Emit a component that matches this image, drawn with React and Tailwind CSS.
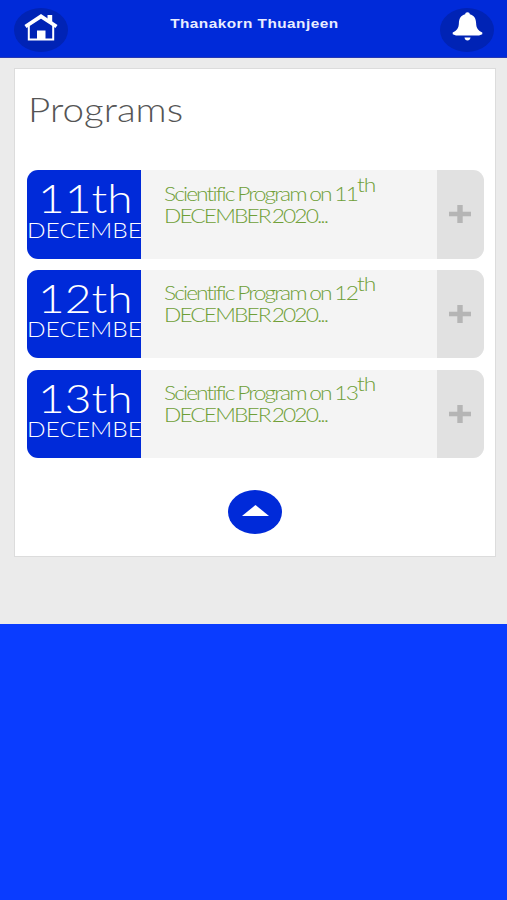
const programs = ["11", "12", "13"];

function HomeIcon() {
  return (
    <svg className="h-[28px] w-[34px]" viewBox="0 0 34 28" fill="none">
      <path d="M4.8 11V25.5H29.2V11" stroke="white" strokeWidth="2" />
      <path d="M1.5 12.5L17 2.3L32.5 12.5" stroke="white" strokeWidth="3.8" strokeLinejoin="miter" />
      <path d="M23.5 1H28.2V10L23.5 7Z" fill="white" />
      <path d="M13 16.5H21.5V26H13Z" fill="white" />
    </svg>
  );
}

function BellIcon() {
  return (
    <svg className="h-[29px] w-[31px]" viewBox="0 0 31 29" fill="white">
      <path d="M13.2 2.2C13.2 .9 14.1.2 15.5.2S17.8.9 17.8 2.2C22 3.2 24 6.6 24.1 11C24.2 16.2 26.2 18.7 30.3 20.5V22.2L27 23.4H4L.7 22.2V20.5C4.8 18.7 6.8 16.2 6.9 11C7 6.6 9 3.2 13.2 2.2Z" />
      <path d="M12.5 25.5H18.5C18.2 27.5 17.2 28.5 15.5 28.5S12.8 27.5 12.5 25.5Z" />
    </svg>
  );
}

function ProgramRow({ day }) {
  return (
    <div className="flex h-[88.5px] overflow-hidden rounded-[11px] bg-[#f4f4f4]">
      <div className="w-[114px] shrink-0 overflow-hidden bg-[#002ad9] pt-[8px] text-white">
        <div className="ml-[11px] h-[38.5px] w-max origin-left scale-x-[1.18] text-[39px] leading-[40px] whitespace-nowrap">
          {day}th
        </div>
        <div className="h-[25px] w-max origin-left scale-x-[1.165] text-[21px] leading-[25px] whitespace-nowrap">
          DECEMBE
        </div>
      </div>
      <div className="flex-1 pt-[12.5px] pl-[23px] text-[#6f9f37]">
        <div className="w-max origin-left scale-x-[1.2] text-[19px] leading-[22px] tracking-[-1.6px] whitespace-nowrap">
          <div className="h-[22px] [word-spacing:-0.5px]">
            Scientific Program on {day}
            <sup className="top-[-9px] text-[19px] leading-none tracking-[-0.8px]">th</sup>
          </div>
          <div className="h-[22px] [word-spacing:-1.8px]">DECEMBER 2020...</div>
        </div>
      </div>
      <div className="flex w-[47px] shrink-0 items-center justify-center bg-[#e1e1e1]">
        <svg className="mr-[1px] h-[18px] w-[22px]" viewBox="0 0 22 18" fill="#b5b5b5">
          <path d="M8.3 0H13.7V6.8H22V11.2H13.7V18H8.3V11.2H0V6.8H8.3Z" />
        </svg>
      </div>
    </div>
  );
}

export default function App() {
  return (
    <div className="flex h-[900px] w-[507px] flex-col overflow-hidden bg-[#ebebeb] font-['Lato',sans-serif] font-light">
      <header className="flex h-[58px] shrink-0 justify-between border-b border-[#2638b4] bg-[#002ad9] px-[14px] pt-[8px]">
        <div className="flex h-[44px] w-[54px] items-center justify-center rounded-[50%] bg-[#0023b5] pb-[5px]">
          <HomeIcon />
        </div>
        <h1 className="mt-[1px] h-[30px] w-max origin-center scale-x-[1.18] font-['Liberation_Sans',sans-serif] text-[13px] leading-[30px] font-bold tracking-[0.4px] whitespace-nowrap text-[#e9edff]">
          Thanakorn Thuanjeen
        </h1>
        <div className="mr-[-1px] flex h-[44px] w-[54px] items-center justify-center rounded-[50%] bg-[#0023b5] pb-[7px] pl-[1px]">
          <BellIcon />
        </div>
      </header>
      <main className="h-[566px] shrink-0 pt-[10px] pr-[11px] pl-[14px]">
        <section className="h-[489px] border border-[#dcdcdc] bg-white pr-[12px] pl-[12px]">
          <h2 className="mt-[20px] ml-[1px] h-[40px] w-max origin-left scale-x-[1.17] text-[33px] leading-[40px] whitespace-nowrap text-[#555]">
            Programs
          </h2>
          <div className="mt-[41px] mr-[-1px] flex flex-col gap-[11.25px]">
            {programs.map((day) => (
              <ProgramRow key={day} day={day} />
            ))}
          </div>
          <button className="mt-[32px] ml-[201px] flex h-[44px] w-[54px] items-center justify-center rounded-[50%] bg-[#002ad9]">
            <svg className="mb-[3px] h-[11px] w-[27px]" viewBox="0 0 27 11" fill="white">
              <path d="M13.5 0L27 11H0Z" />
            </svg>
          </button>
        </section>
      </main>
      <div className="flex-1 bg-[#0a3cff]" />
    </div>
  );
}
